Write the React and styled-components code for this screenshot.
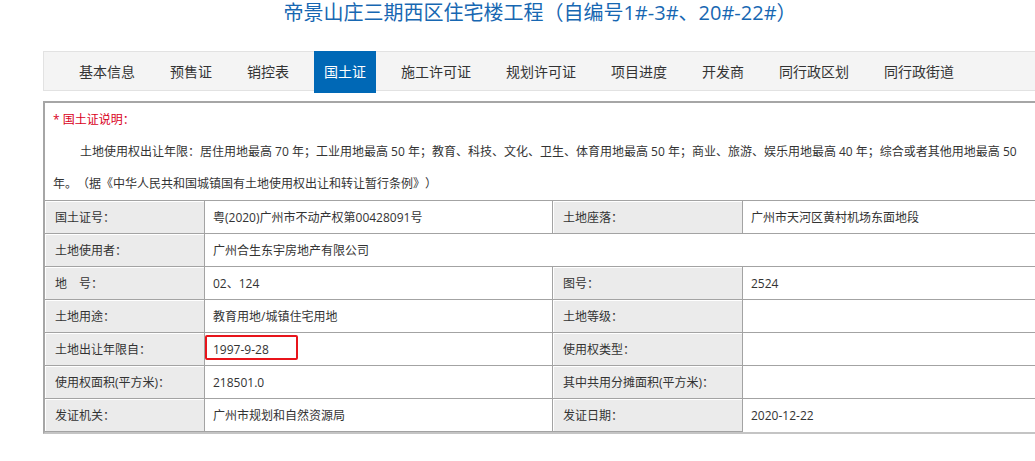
import React from "react";
import styled, { createGlobalStyle } from "styled-components";

const Global = createGlobalStyle`
  html, body { margin: 0; padding: 0; background: #fff; overflow: hidden; }
  body {
    font-family: "Open Sans", "Noto Sans CJK SC", "Microsoft YaHei", sans-serif;
    color: #333;
    text-spacing-trim: space-all;
  }
`;

const Page = styled.div`
  padding-left: 43px;
  width: 1100px;
`;

const Title = styled.h1`
  width: 994px;
  margin: 0;
  height: 26px;
  line-height: 26px;
  font-size: 20px;
  font-weight: normal;
  text-align: center;
  color: #1767b2;
  white-space: nowrap;
`;

const Nav = styled.ul`
  list-style: none;
  margin: 25px 0 0;
  padding: 0 0 0 25px;
  width: 1060px;
  height: 38px;
  display: flex;
  gap: 15px;
  background: #f4f4f4;
  border: 1px solid #e2e2e2;
`;

const Tab = styled.li`
  margin-top: -1px;
  height: 42px;
  line-height: 42px;
  padding: 0 10px;
  font-size: 14px;
  white-space: nowrap;
  color: ${(p) => (p.$active ? "#fff" : "#333")};
  background: ${(p) => (p.$active ? "#0068b6" : "transparent")};
`;

const Sheet = styled.div`
  margin-top: 10px;
  width: 1100px;
  display: grid;
  grid-template-columns: 160px 348px 190px 1fr;
  border-top: 2px solid #a6a6a6;
  border-left: 2px solid #a6a6a6;
  border-bottom: 2px solid #c4c4c4;
  font-size: 12px;
`;

const Notice = styled.div`
  grid-column: 1 / -1;
  padding: 1px 10px 0 8px;
  line-height: 32px;
  border-bottom: 1px solid #a3a3a3;
`;

const NoticeHead = styled.div`
  color: #d9001b;
`;

const NoticeBody = styled.div`
  text-indent: 27px;
  color: #333;
  white-space: nowrap;
`;

const Cell = styled.div`
  position: relative;
  height: 33px;
  line-height: 33px;
  box-sizing: border-box;
  border-right: 1px solid #a3a3a3;
  border-bottom: 1px solid #a3a3a3;
  white-space: nowrap;
  ${(p) => (p.$span ? `grid-column: span ${p.$span};` : "")}
  &:last-child {
    border-bottom: none;
  }
`;

const Label = styled(Cell)`
  padding-left: 10px;
  background: #ebebeb;
  box-shadow: inset 1px 1px 0 #fff;
  color: #333;
`;

const Value = styled(Cell)`
  padding-left: 8px;
  background: #fff;
  color: #333;
`;

const Highlight = styled.span`
  position: absolute;
  left: 0;
  top: 2px;
  width: 93px;
  height: 25px;
  box-sizing: border-box;
  border: 2px solid #e8141b;
  border-radius: 2px;
`;

const tabs = ["基本信息", "预售证", "销控表", "国土证", "施工许可证", "规划许可证", "项目进度", "开发商", "同行政区划", "同行政街道"];

export default function App() {
  return (
    <Page>
      <Global />
      <Title>帝景山庄三期西区住宅楼工程（自编号1#-3#、20#-22#）</Title>
      <Nav>
        {tabs.map((t) => (
          <Tab key={t} $active={t === "国土证"}>{t}</Tab>
        ))}
      </Nav>
      <Sheet>
        <Notice>
          <NoticeHead>* 国土证说明：</NoticeHead>
          <NoticeBody>
            土地使用权出让年限：居住用地最高 70 年；工业用地最高 50 年；教育、科技、文化、卫生、体育用地最高 50 年；商业、旅游、娱乐用地最高 40 年；综合或者其他用地最高 50
          </NoticeBody>
          <div>年。（据《中华人民共和国城镇国有土地使用权出让和转让暂行条例》）</div>
        </Notice>
        <Label>国土证号：</Label>
        <Value>粤(2020)广州市不动产权第00428091号</Value>
        <Label>土地座落：</Label>
        <Value>广州市天河区黄村机场东面地段</Value>

        <Label>土地使用者：</Label>
        <Value $span={3}>广州合生东宇房地产有限公司</Value>

        <Label>地　号：</Label>
        <Value>02、124</Value>
        <Label>图号：</Label>
        <Value>2524</Value>

        <Label>土地用途：</Label>
        <Value>教育用地/城镇住宅用地</Value>
        <Label>土地等级：</Label>
        <Value />

        <Label>土地出让年限自：</Label>
        <Value>
          1997-9-28
          <Highlight />
        </Value>
        <Label>使用权类型：</Label>
        <Value />

        <Label>使用权面积(平方米)：</Label>
        <Value>218501.0</Value>
        <Label>其中共用分摊面积(平方米)：</Label>
        <Value />

        <Label>发证机关：</Label>
        <Value>广州市规划和自然资源局</Value>
        <Label>发证日期：</Label>
        <Value>2020-12-22</Value>
      </Sheet>
    </Page>
  );
}
